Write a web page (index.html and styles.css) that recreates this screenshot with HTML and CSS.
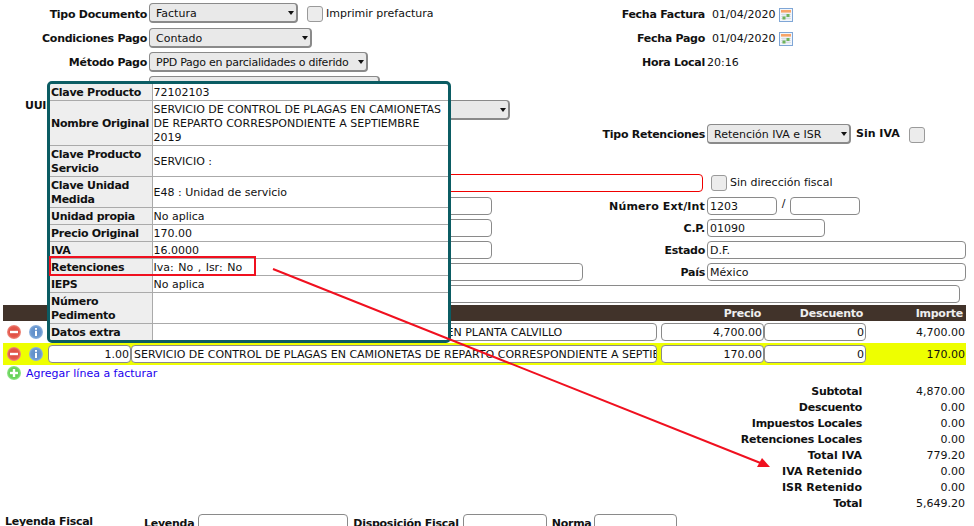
FILE: index.html
```html
<!DOCTYPE html>
<html lang="es">
<head>
<meta charset="utf-8">
<title>Factura</title>
<link rel="stylesheet" href="styles.css">
</head>
<body>
<svg width="0" height="0" class="defs">
  <defs>
    <radialGradient id="gr"><stop offset="0" stop-color="#dd4a40"/><stop offset=".72" stop-color="#e4584c"/><stop offset="1" stop-color="#ee8e82"/></radialGradient>
    <radialGradient id="gb"><stop offset="0" stop-color="#5a8ac6"/><stop offset=".72" stop-color="#6a98d0"/><stop offset="1" stop-color="#92b6e0"/></radialGradient>
    <radialGradient id="gg"><stop offset="0" stop-color="#58c84a"/><stop offset=".72" stop-color="#6ad45c"/><stop offset="1" stop-color="#94e68a"/></radialGradient>
    <symbol id="i-del" viewBox="0 0 14 14"><circle cx="7" cy="7" r="7" fill="url(#gr)"/><rect x="3" y="5.8" width="8" height="2.4" fill="#fff"/></symbol>
    <symbol id="i-info" viewBox="0 0 14 14"><circle cx="7" cy="7" r="7" fill="url(#gb)"/><rect x="6" y="3" width="2" height="1.8" fill="#fff"/><rect x="6" y="5.8" width="2" height="5.2" fill="#fff"/></symbol>
    <symbol id="i-add" viewBox="0 0 14 14"><circle cx="7" cy="7" r="7" fill="url(#gg)"/><rect x="3" y="5.8" width="8" height="2.4" fill="#fff"/><rect x="5.8" y="3" width="2.4" height="8" fill="#fff"/></symbol>
    <symbol id="i-cal" viewBox="0 0 14 14"><rect x=".5" y=".5" width="13" height="13" fill="#f2f6fb" stroke="#7fa6d6"/><rect x="2" y="2" width="10" height="2.6" fill="#f7a468"/><path d="M2 6.5h10M2 8.5h10M2 10.5h10M4 5.5v6M6 5.5v6M8 5.5v6M10 5.5v6" stroke="#c9d3de" stroke-width=".6"/><rect x="3.5" y="8.5" width="3" height="3" fill="#6fb35a"/><rect x="7.5" y="6" width="3" height="3" fill="#6fb35a"/></symbol>
  </defs>
</svg>

<main class="page">
  <div class="form">
    <div class="row">
      <label class="lbl">Tipo Documento</label>
      <div class="ctl up">
        <span class="sel w149"><select><option>Factura</option></select></span>
        <input type="checkbox" class="chk ml9"><span class="opt">Imprimir prefactura</span>
      </div>
      <label class="lbl">Fecha Factura</label>
      <div class="date"><span>01/04/2020</span><svg class="cal"><use href="#i-cal"/></svg></div>
    </div>
    <div class="row">
      <label class="lbl">Condiciones Pago</label>
      <div class="ctl"><span class="sel w163"><select><option>Contado</option></select></span></div>
      <label class="lbl">Fecha Pago</label>
      <div class="date"><span>01/04/2020</span><svg class="cal"><use href="#i-cal"/></svg></div>
    </div>
    <div class="row">
      <label class="lbl">Método Pago</label>
      <div class="ctl"><span class="sel w219 tight"><select><option>PPD Pago en parcialidades o diferido</option></select></span></div>
      <label class="lbl">Hora Local</label>
      <div class="hora">20:16</div>
    </div>
    <div class="row">
      <span></span>
      <div class="ctl"><span class="sel w231"><select><option></option></select></span></div>
    </div>
    <div class="row">
      <label class="lbl lbl-left">UUID</label>
      <div class="ctl"><span class="sel w361"><select><option></option></select></span></div>
    </div>
    <div class="row row-gap">
      <span></span>
      <span></span>
      <label class="lbl">Tipo Retenciones</label>
      <div class="ctl">
        <span class="sel w144"><select><option>Retención IVA e ISR</option></select></span>
        <b class="siniva ls0">Sin IVA</b><input type="checkbox" class="chk">
      </div>
    </div>

    <div class="row addr addr-first">
      <span></span>
      <div class="ctl span2"><input class="txt w554 txt-red" type="text"></div>
      <div class="ctl fiscal"><input type="checkbox" class="chk"><span class="opt">Sin dirección fiscal</span></div>
    </div>
    <div class="row addr">
      <span></span>
      <div class="ctl"><input class="txt w343" type="text"></div>
      <label class="lbl lbl-wide">Número Ext/Int</label>
      <div class="ctl"><input class="txt w70" type="text" value="1203"><span class="slash">/</span><input class="txt w70" type="text"></div>
    </div>
    <div class="row addr">
      <span></span>
      <div class="ctl"><input class="txt w343" type="text"></div>
      <label class="lbl">C.P.</label>
      <div class="ctl"><input class="txt w118" type="text" value="01090"></div>
    </div>
    <div class="row addr">
      <span></span>
      <div class="ctl"><input class="txt w343" type="text"></div>
      <label class="lbl">Estado</label>
      <div class="ctl"><input class="txt w259" type="text" value="D.F."></div>
    </div>
    <div class="row addr">
      <span></span>
      <div class="ctl"><input class="txt w434" type="text"></div>
      <label class="lbl">País</label>
      <div class="ctl"><input class="txt w259" type="text" value="México"></div>
    </div>
    <div class="row addr addr-last">
      <span></span>
      <div class="ctl span3"><input class="txt w811" type="text"></div>
    </div>
  </div>

  <section class="lines">
    <div class="line head">
      <span></span><span></span><span></span>
      <span class="num">Precio</span><span class="num">Descuento</span><span class="num">Importe</span>
    </div>
    <div class="line item">
      <span class="acts"><svg class="ico"><use href="#i-del"/></svg><svg class="ico"><use href="#i-info"/></svg></span>
      <input class="txt right" type="text" value="1.00">
      <input class="txt" type="text" value="SERVICIO DE CONTROL DE PLAGAS EN CAMIONETAS 1-2 EN PLANTA CALVILLO">
      <input class="txt right price" type="text" value="4,700.00">
      <input class="txt right" type="text" value="0">
      <span class="num">4,700.00</span>
    </div>
    <div class="line item current">
      <span class="acts"><svg class="ico"><use href="#i-del"/></svg><svg class="ico"><use href="#i-info"/></svg></span>
      <input class="txt right" type="text" value="1.00">
      <input class="txt" type="text" value="SERVICIO DE CONTROL DE PLAGAS EN CAMIONETAS DE REPARTO CORRESPONDIENTE A SEPTIEMBRE 2019">
      <input class="txt right price" type="text" value="170.00">
      <input class="txt right" type="text" value="0">
      <span class="num">170.00</span>
    </div>
    <a class="addline" href="#"><svg class="ico"><use href="#i-add"/></svg><span>Agregar línea a facturar</span></a>
  </section>

  <dl class="totals">
    <div><dt>Subtotal</dt><dd>4,870.00</dd></div>
    <div><dt>Descuento</dt><dd>0.00</dd></div>
    <div><dt>Impuestos Locales</dt><dd>0.00</dd></div>
    <div><dt>Retenciones Locales</dt><dd>0.00</dd></div>
    <div><dt class="ls0">Total IVA</dt><dd>779.20</dd></div>
    <div><dt class="ls0">IVA Retenido</dt><dd>0.00</dd></div>
    <div><dt class="ls0">ISR Retenido</dt><dd>0.00</dd></div>
    <div><dt>Total</dt><dd>5,649.20</dd></div>
  </dl>

  <div class="legend">
    <b class="legend-title">Leyenda Fiscal</b>
    <b>Leyenda</b><input class="txt w150" type="text">
    <b>Disposición Fiscal</b><input class="txt w84" type="text">
    <b>Norma</b><input class="txt w83 pull" type="text">
  </div>
</main>

<aside class="popup">
  <table>
    <tr><th>Clave Producto</th><td>72102103</td></tr>
    <tr><th>Nombre Original</th><td>SERVICIO DE CONTROL DE PLAGAS EN CAMIONETAS DE REPARTO CORRESPONDIENTE A SEPTIEMBRE 2019</td></tr>
    <tr><th>Clave Producto Servicio</th><td>SERVICIO :</td></tr>
    <tr><th>Clave Unidad Medida</th><td>E48 : Unidad de servicio</td></tr>
    <tr><th>Unidad propia</th><td>No aplica</td></tr>
    <tr><th>Precio Original</th><td>170.00</td></tr>
    <tr><th>IVA</th><td>16.0000</td></tr>
    <tr><th>Retenciones</th><td class="spaced">Iva: No , Isr: No</td></tr>
    <tr><th>IEPS</th><td>No aplica</td></tr>
    <tr><th>Número Pedimento</th><td></td></tr>
    <tr><th>Datos extra</th><td></td></tr>
  </table>
</aside>

<div class="callout"></div>
<svg class="arrow" viewBox="0 0 974 526" width="974" height="526">
  <line x1="273" y1="269" x2="763" y2="464" stroke="#f0101f" stroke-width="2"/>
  <polygon points="770,467 757,467 762,458" fill="#f0101f"/>
</svg>
</body>
</html>
```

FILE: styles.css
```css
* { box-sizing: border-box; }
html, body { margin: 0; height: 526px; overflow: hidden; background: #fff; }
body { font: 11px/14px "DejaVu Sans", Verdana, sans-serif; color: #111; position: relative; }
b, th, dt, .lbl, .head { letter-spacing: -0.27px; }
b.ls0, dt.ls0 { letter-spacing: 0; }
.lbl.lbl-wide { letter-spacing: 0.15px; }
.defs { position: absolute; }

.page { padding-top: 4px; }

.row {
  display: grid;
  grid-template-columns: 147px 449px 105px 1fr;
  column-gap: 2px;
  height: 24px;
  align-items: start;
}
.row-gap { height: 50px; }
.addr { height: 22px; }
.addr .lbl { padding-top: 3px; }
.addr-first { height: 23px; }
.addr-last { height: 20px; }
.lbl { font-weight: bold; text-align: right; padding-top: 4px; white-space: nowrap; }
.lbl-left { text-align: left; padding: 0 0 0 25px; margin-top: -1px; }
.ctl { display: flex; align-items: flex-start; min-width: 0; }
.up { margin-top: -1px; }
.span2 { grid-column: span 2; }
.span3 { grid-column: span 3; }
.fiscal { padding: 1px 0 0 4px; }
.fiscal .opt { margin-top: 1px; }

.sel { position: relative; display: block; height: 20px; flex: none; }
.sel select {
  appearance: none;
  display: block;
  width: 100%;
  height: 100%;
  margin: 0;
  padding: 2px 10px 0 6px;
  border: 1px solid #8a8a8a;
  border-right-width: 2px;
  border-bottom-width: 2px;
  border-radius: 4px;
  background: #e9e9e9;
  font: inherit;
  color: #111;
}
.tight select { letter-spacing: -0.25px; }
.sel::after {
  content: "";
  position: absolute;
  right: 4px;
  top: 8px;
  border: 3px solid transparent;
  border-top: 4px solid #111;
  border-bottom: 0;
}
.w144 { width: 144px; }
.w149 { width: 149px; }
.w163 { width: 163px; }
.w219 { width: 219px; }
.w231 { width: 231px; }
.w361 { width: 361px; }

.chk {
  appearance: none;
  flex: none;
  width: 16px;
  height: 16px;
  margin: 0;
  background: #ececec;
  border: 1px solid #9a9a9a;
  border-radius: 3px;
}
.ml9 { margin: 3px 0 0 9px; }
.opt { margin: 4px 0 0 3px; white-space: nowrap; }
.siniva { margin: 3px 0 0 5px; width: 53px; }
.siniva + .chk { margin-top: 3px; }

.date { display: flex; align-items: flex-start; padding: 4px 0 0 5px; }
.cal { width: 14px; height: 14px; margin: 0 0 0 4px; }
.hora { padding-top: 4px; }

.txt {
  display: block;
  flex: none;
  height: 18px;
  margin: 0;
  padding: 0 0 0 2px;
  border: 1px solid #8a8a8a;
  border-radius: 4px;
  background: #fff;
  font: inherit;
  color: #111;
  min-width: 0;
}
.txt-red { border-color: #f00000; }
.right { text-align: right; padding-right: 1px; }
.w70 { width: 70px; }
.w83 { width: 83px; }
.w84 { width: 84px; }
.w118 { width: 118px; }
.w150 { width: 150px; }
.w259 { width: 259px; }
.w343 { width: 343px; }
.w434 { width: 434px; }
.w554 { width: 554px; }
.w811 { width: 811px; }
.slash { width: 13px; text-align: center; }

.lines { margin: 0 8px 0 3px; }
.line {
  display: grid;
  grid-template-columns: 45px 83px 526px 107px 102px 1fr;
  align-items: center;
}
.line > input { width: 100%; }
.line > .price { width: 103px; justify-self: end; }
.head { height: 16px; background: #41332a; color: #eee; font-weight: bold; }
.num { text-align: right; padding: 2px 1px 0 0; }
.head .num { padding-right: 3px; }
.item { height: 22px; }
.current { background: #eeff00; }
.acts { display: flex; gap: 8px; padding-left: 4px; }
.ico { width: 14px; height: 14px; flex: none; display: block; }
.addline { display: flex; align-items: center; gap: 5px; height: 16px; padding-left: 4px; color: #2200ee; text-decoration: none; }
.addline span { padding-top: 2px; }

.totals { margin: 4px 9px 0 0; }
.totals div { display: grid; grid-template-columns: 1fr 103px; height: 16px; }
.totals dt { font-weight: bold; text-align: right; }
.totals dd { margin: 0; text-align: right; }

.legend { display: flex; align-items: flex-start; margin: 1px 0 0 5px; }
.legend b { padding-top: 3px; white-space: nowrap; margin-right: 4px; }
.legend .txt { margin-right: 5px; }
.legend .pull { margin-left: -1px; }
.legend .legend-title { width: 139px; margin-right: 0; padding-top: 1px; }

.popup {
  position: absolute;
  left: 47px;
  top: 81px;
  width: 404px;
  border: 3px solid #0b5c63;
  border-radius: 5px;
  background: #fff;
  overflow: hidden;
}
.popup table { border-collapse: collapse; width: 100%; table-layout: fixed; }
.popup tr:first-child th, .popup tr:first-child td { border-top: 0; }
.popup tr:last-child th, .popup tr:last-child td { border-bottom: 0; }
.popup th, .popup td { border: 1px solid #aaa; padding: 2px 2px 0 1px; vertical-align: middle; text-align: left; }
.popup th:first-child { border-left: 0; }
.popup td:last-child { border-right: 0; }
.popup th { width: 102px; background: #eee; font-weight: bold; }
.popup .spaced { word-spacing: 1px; }

.callout { position: absolute; left: 49px; top: 256px; width: 207px; height: 20px; border: 2px solid #f0101f; }
.arrow { position: absolute; left: 0; top: 0; pointer-events: none; }
```
